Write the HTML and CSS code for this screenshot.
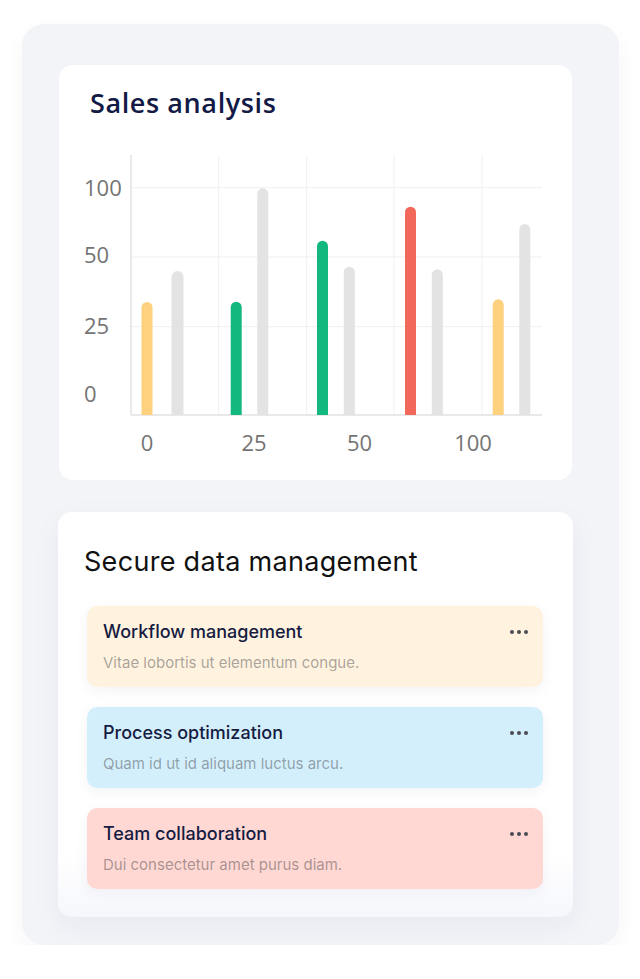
FILE: index.html
```html
<!DOCTYPE html>
<html lang="en">
<head>
<meta charset="utf-8">
<title>Dashboard</title>
<link rel="stylesheet" href="styles.css">
</head>
<body>
<div class="panel">
  <section class="card chart-card">
    <h2 class="chart-title">Sales analysis</h2>
    <svg class="chart" width="513" height="330" viewBox="59 140 513 330" xmlns="http://www.w3.org/2000/svg">
      <g class="grid">
        <line x1="131" y1="187.7" x2="542" y2="187.7"/>
        <line x1="131" y1="257" x2="542" y2="257"/>
        <line x1="131" y1="326.7" x2="542" y2="326.7"/>
        <line x1="218.7" y1="155" x2="218.7" y2="415"/>
        <line x1="306.7" y1="155" x2="306.7" y2="415"/>
        <line x1="394" y1="155" x2="394" y2="415"/>
        <line x1="482" y1="155" x2="482" y2="415"/>
      </g>
      <g class="axis">
        <line x1="131" y1="155" x2="131" y2="415"/>
        <line x1="131" y1="415" x2="542" y2="415"/>
      </g>
      <g class="bars">
        <path class="b-yellow" d="M141.5 415 V307.5 a5.5 5.5 0 0 1 11 0 V415 Z"/>
        <path class="b-grey" d="M171.5 415 V277 a6 6 0 0 1 12 0 V415 Z"/>
        <path class="b-green" d="M230.7 415 V307.2 a5.5 5.5 0 0 1 11 0 V415 Z"/>
        <path class="b-grey" d="M257.3 415 V193.8 a5.5 5.5 0 0 1 11 0 V415 Z"/>
        <path class="b-green" d="M317 415 V246.2 a5.5 5.5 0 0 1 11 0 V415 Z"/>
        <path class="b-grey" d="M343.8 415 V272.2 a5.5 5.5 0 0 1 11 0 V415 Z"/>
        <path class="b-red" d="M405 415 V212.2 a5.5 5.5 0 0 1 11 0 V415 Z"/>
        <path class="b-grey" d="M431.8 415 V274.8 a5.5 5.5 0 0 1 11 0 V415 Z"/>
        <path class="b-yellow" d="M492.7 415 V304.8 a5.5 5.5 0 0 1 11 0 V415 Z"/>
        <path class="b-grey" d="M519.3 415 V229.5 a5.5 5.5 0 0 1 11 0 V415 Z"/>
      </g>
      <g class="labels">
        <text x="84" y="196">100</text>
        <text x="84" y="263">50</text>
        <text x="84" y="334">25</text>
        <text x="84" y="402">0</text>
        <text class="xl" x="147" y="451">0</text>
        <text class="xl" x="254" y="451">25</text>
        <text class="xl" x="359.5" y="451">50</text>
        <text class="xl" x="473" y="451">100</text>
      </g>
    </svg>
  </section>

  <section class="card list-card">
    <h2 class="list-title">Secure data management</h2>
    <div class="items">
      <div class="item item-yellow">
        <div class="item-text">
          <div class="item-name">Workflow management</div>
          <div class="item-desc">Vitae lobortis ut elementum congue.</div>
        </div>
        <div class="dots"><span></span><span></span><span></span></div>
      </div>
      <div class="item item-blue">
        <div class="item-text">
          <div class="item-name">Process optimization</div>
          <div class="item-desc">Quam id ut id aliquam luctus arcu.</div>
        </div>
        <div class="dots"><span></span><span></span><span></span></div>
      </div>
      <div class="item item-red">
        <div class="item-text">
          <div class="item-name">Team collaboration</div>
          <div class="item-desc">Dui consectetur amet purus diam.</div>
        </div>
        <div class="dots"><span></span><span></span><span></span></div>
      </div>
    </div>
  </section>
</div>
</body>
</html>
```

FILE: styles.css
```css
html, body {
  margin: 0;
  padding: 0;
  background: #ffffff;
}

body {
  font-family: "Inter", "Liberation Sans", sans-serif;
}

.panel {
  box-sizing: border-box;
  margin: 24px 0 0 22px;
  width: 597px;
  height: 921px;
  padding: 41px 47px 0 37px;
  background: #f3f4f8;
  border-radius: 22px;
  display: flex;
  flex-direction: column;
  gap: 32px;
  box-shadow: 0 10px 24px rgba(40, 50, 100, 0.04);
}

.card {
  background: #ffffff;
  border-radius: 14px;
}

.chart-card {
  width: 513px;
  height: 415px;
  box-sizing: border-box;
  padding: 20px 0 10px 0;
  display: flex;
  flex-direction: column;
}

.chart-title {
  margin: 0 0 19px 31px;
  font-family: "Open Sans", "Liberation Sans", sans-serif;
  font-size: 27px;
  line-height: 36px;
  font-weight: 600;
  letter-spacing: 0.6px;
  color: #131a45;
}

.chart {
  display: block;
}

.grid line {
  stroke: #efefef;
  stroke-width: 1;
}

.axis line {
  stroke: #e2e2e2;
  stroke-width: 1.5;
}

.b-yellow { fill: #fdd17e; }
.b-green { fill: #13b87f; }
.b-red { fill: #f2685a; }
.b-grey { fill: #e3e3e3; }

.labels text {
  font-family: "Open Sans", "Liberation Sans", sans-serif;
  font-size: 22px;
  fill: #747474;
}

.labels .xl {
  text-anchor: middle;
}

.list-card {
  margin-left: -1px;
  width: 515px;
  box-sizing: border-box;
  padding: 32px 30px 28px 29px;
  background: linear-gradient(to bottom, #ffffff 0%, #ffffff 84%, #f6f7fc 100%);
  box-shadow: 0 10px 30px rgba(30, 40, 100, 0.05);
}

.list-title {
  margin: 0 0 26px -3px;
  font-family: "Inter", "Liberation Sans", sans-serif;
  font-size: 27px;
  line-height: 36px;
  font-weight: 400;
  letter-spacing: 0.3px;
  color: #111111;
}

.items {
  display: flex;
  flex-direction: column;
  gap: 20px;
}

.item {
  height: 81px;
  box-sizing: border-box;
  padding: 14px 15px 0 16px;
  border-radius: 10px;
  display: flex;
  justify-content: space-between;
  align-items: flex-start;
  box-shadow: 0 4px 14px rgba(30, 40, 90, 0.05);
}

.item-yellow { background: #fff3e0; }
.item-blue { background: #d4effc; }
.item-red { background: #ffd8d3; }

.item-name {
  font-size: 18px;
  line-height: 24px;
  font-weight: 500;
  color: #161b42;
}

.item-desc {
  margin-top: 9px;
  font-size: 15px;
  line-height: 20px;
  color: rgba(30, 30, 40, 0.4);
}

.dots {
  display: flex;
  gap: 2.5px;
  height: 24px;
  align-items: center;
}

.dots span {
  width: 4.5px;
  height: 4.5px;
  border-radius: 50%;
  background: #4b4b55;
}
```
